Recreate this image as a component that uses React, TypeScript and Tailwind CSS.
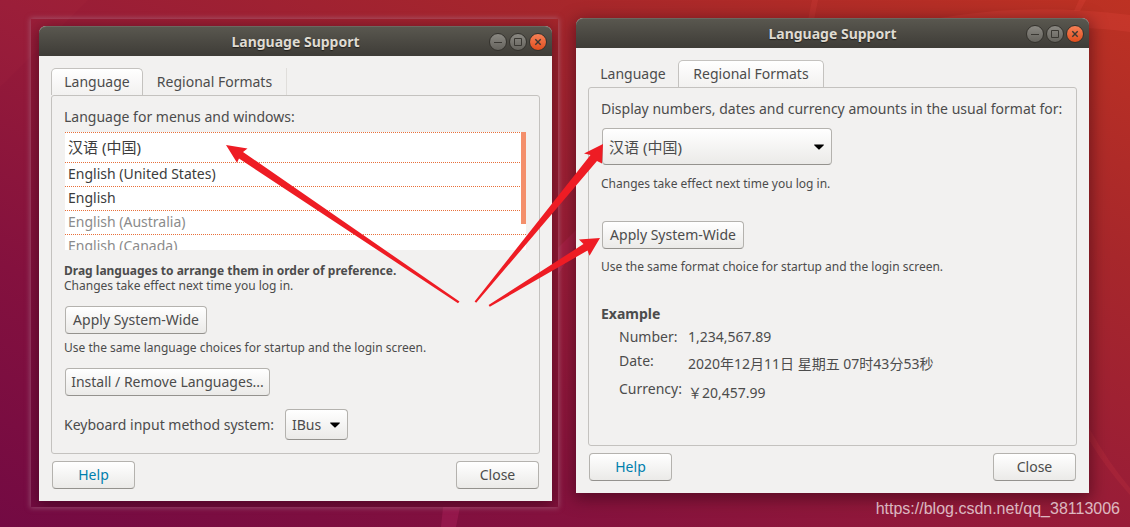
import type { ReactNode } from "react";

const languages = [
  { name: "汉语 (中国)", style: "h-[30px] text-[15px] text-[#3c3c3c]" },
  { name: "English (United States)", style: "h-6 text-[#3c3c3c]" },
  { name: "English", style: "h-6 text-[#3c3c3c]" },
  { name: "English (Australia)", style: "h-6 text-[#8b8b8b]" },
  { name: "English (Canada)", style: "h-6 text-[#8b8b8b]" },
];

const buttonBase =
  "h-7 rounded border border-[#b4b2ae] border-b-[#94928e] bg-linear-to-b from-white to-[#ebeae8] whitespace-nowrap";

function ActionButton({ children, wide }: { children: ReactNode; wide?: boolean }) {
  return (
    <button type="button" className={wide ? `${buttonBase} ml-px w-[205px]` : `${buttonBase} ml-px w-[142px]`}>
      {children}
    </button>
  );
}

function Note({ children, className = "" }: { children: ReactNode; className?: string }) {
  return <p className={`text-[12px] leading-[15px] ${className}`}>{children}</p>;
}

function DropDown({ id, value, className }: { id: string; value: string; className: string }) {
  return (
    <div className={`relative ${className}`}>
      <select
        id={id}
        defaultValue={value}
        className="h-full w-full appearance-none rounded border border-[#b4b2ae] border-b-[#94928e] bg-linear-to-b from-white to-[#ebeae8] pl-1.5"
      >
        <option>{value}</option>
      </select>
      <svg className="pointer-events-none absolute top-1/2 right-2 -mt-[3px] h-1.5 w-[10px]" viewBox="0 0 10 6">
        <path d="M.2 .4h9.6v.8L5.4 5.6h-.8L.2 1.2z" fill="#000" />
      </svg>
    </div>
  );
}

function WindowControl({ kind }: { kind: "Minimize" | "Maximize" | "Close" }) {
  const close = kind === "Close";
  return (
    <button
      type="button"
      aria-label={`${kind} window`}
      className={
        close
          ? "size-[18px] rounded-full border border-[#34322d] bg-linear-to-b from-[#f68055] to-[#e04d1b]"
          : "size-[18px] rounded-full border border-[#34322d] bg-linear-to-b from-[#8b8983] to-[#65635d]"
      }
    >
      <svg viewBox="0 0 16 16" className="size-4" fill="none" stroke="#3a3833" strokeWidth="1">
        {kind === "Minimize" && <path d="M4 8.5h8" />}
        {kind === "Maximize" && <path d="M4.5 4.5h7v7h-7z" />}
        {close && <path d="M5.3 5.3l5.4 5.4M10.7 5.3l-5.4 5.4" strokeWidth="1.4" />}
      </svg>
    </button>
  );
}

function Tabs({ active }: { active: number }) {
  const on = "rounded-t-[5px] border border-b-0 border-[#c4c2bf] bg-linear-to-b from-white to-[#f2f1f0]";
  return (
    <div role="tablist" className="flex h-[27px]">
      <button type="button" role="tab" aria-selected={active === 0} className={active === 0 ? `w-[92px] ${on}` : "w-[90px]"}>
        Language
      </button>
      <button
        type="button"
        role="tab"
        aria-selected={active === 1}
        className={active === 1 ? `w-[146px] ${on}` : "w-[144px] border-r border-[#e0dedb]"}
      >
        Regional Formats
      </button>
    </div>
  );
}

function DialogWindow({ active, panelClass, children }: { active: number; panelClass: string; children: ReactNode }) {
  return (
    <section className="rounded-t-[7px] bg-[#f2f1f0] text-[14px] leading-5 text-[#4c4c4c] shadow-[0_4px_16px_2px_rgba(40,0,15,0.5)]">
      <header className="grid h-[30px] grid-cols-[1fr_auto_1fr] items-center rounded-t-[7px] border-t border-[#6b6860] bg-linear-to-b from-[#59574f] to-[#3e3c37] px-[5px]">
        <h1 className="col-start-2 font-bold text-[#dfdbd2] [text-shadow:0_1px_1px_#22201c]">Language Support</h1>
        <div className="flex justify-end gap-0.5">
          <WindowControl kind="Minimize" />
          <WindowControl kind="Maximize" />
          <WindowControl kind="Close" />
        </div>
      </header>
      <div className="px-3 py-3">
        <Tabs active={active} />
        <div role="tabpanel" className={`rounded-[3px] border border-[#c4c2bf] pt-[11px] pl-3 ${panelClass}`}>
          {children}
        </div>
        <footer className="mt-[7px] flex justify-between px-px">
          <button type="button" className={`${buttonBase} w-[83px] text-[#007fae]`}>
            Help
          </button>
          <button type="button" className={`${buttonBase} w-[83px]`}>
            Close
          </button>
        </footer>
      </div>
    </section>
  );
}

function LanguagePanel() {
  return (
    <>
      <h2>Language for menus and windows:</h2>
      <div className="relative mt-[5px] ml-px h-[118px] overflow-hidden bg-white">
        <ul>
          {languages.map((l) => (
            <li key={l.name} className={`flex items-center border-t border-dotted border-[#e8703a] pb-0.5 pl-[3px] ${l.style}`}>
              {l.name}
            </li>
          ))}
        </ul>
        <div className="absolute top-0 right-0 h-[92px] w-[5px] bg-[#f48f6b]" />
      </div>
      <Note className="mt-[13px] font-bold">Drag languages to arrange them in order of preference.</Note>
      <Note className="mb-[13px]">Changes take effect next time you log in.</Note>
      <ActionButton>Apply System-Wide</ActionButton>
      <Note className="mt-1.5 mb-[13px]">Use the same language choices for startup and the login screen.</Note>
      <ActionButton wide>Install / Remove Languages...</ActionButton>
      <div className="mt-[13px] flex items-center gap-[7px]">
        <label htmlFor="input-method" className="min-w-[214px] whitespace-nowrap">
          Keyboard input method system:
        </label>
        <DropDown id="input-method" value="IBus" className="h-[31px] w-[63px]" />
      </div>
    </>
  );
}

function FormatsPanel() {
  return (
    <>
      <label htmlFor="format" className="block whitespace-nowrap">
        Display numbers, dates and currency amounts in the usual format for:
      </label>
      <DropDown id="format" value="汉语 (中国)" className="mt-[9px] ml-px h-[37px] w-[230px] text-[15px]" />
      <Note className="mt-[11px] mb-[30px]">Changes take effect next time you log in.</Note>
      <ActionButton>Apply System-Wide</ActionButton>
      <Note className="mt-[10px]">Use the same format choice for startup and the login screen.</Note>
      <h2 className="mt-[30px] font-bold">Example</h2>
      <dl className="mt-[3px] grid grid-cols-[69px_1fr] gap-y-1 pl-[18px]">
        <dt>Number:</dt>
        <dd>1,234,567.89</dd>
        <dt>Date:</dt>
        <dd className="pt-[3px] pb-px">2020年12月11日 星期五 07时43分53秒</dd>
        <dt>Currency:</dt>
        <dd className="pt-1">￥20,457.99</dd>
      </dl>
    </>
  );
}

function Wallpaper() {
  return (
    <svg className="absolute inset-0 h-full w-full" viewBox="0 0 1130 527" preserveAspectRatio="none">
      <g fill="#ff5a50">
        <path d="M0 0H88L0 87z" fillOpacity=".03" />
        <path d="M812 0h6l-4 20h-6z" fillOpacity=".12" />
        <path d="M940 18Q1030 2 1130 15V32Q1100 28 1080 28L1040 18z" fillOpacity=".15" />
        <path d="M1079 0h7l-6 11h-6z" fillOpacity=".15" />
        <path d="M1089 428Q1108 462 1130 488V495Q1105 467 1089 440z" fillOpacity=".1" />
      </g>
      <g fill="#d02a70">
        <path d="M443 507h17l-4 20h-15z" fillOpacity=".25" />
        <path d="M558 248L576 230V245L558 275z" fillOpacity=".2" />
      </g>
    </svg>
  );
}

function Arrows() {
  return (
    <svg className="pointer-events-none absolute top-0 left-0 h-[527px] w-[1130px]" viewBox="0 0 1130 527" fill="#ee1c24">
      <path d="M226 145L247.5 148.5L243 152L459.5 301.5L458 303.2L239 158.5L237 162.8z" />
      <path d="M603 144L584 153.5L590.5 155L474.6 301.5L476.2 302.8L597 161L602 163.5z" />
      <path d="M600 238L579 239.5L583.5 244L488.6 305L489.8 306.8L587.5 250.5L589.5 255.8z" />
    </svg>
  );
}

export default function App() {
  return (
    <main className="relative flex min-h-screen items-start gap-[18px] overflow-hidden bg-[linear-gradient(to_top_right,#730a43_0%,#84113e_25%,#981c38_50%,#a7272b_75%,#bd3223_100%)] pt-[18px] pr-[41px] pb-5 pl-[31px] font-['Noto_Sans','Noto_Sans_CJK_SC',sans-serif]">
      <Wallpaper />
      <div className="relative mt-px flex-1 overflow-hidden pt-[7px] pr-1.5 pb-1.5 pl-2 shadow-[0_0_5px_1px_rgba(170,120,140,0.55)]">
        <DialogWindow active={0} panelClass="pr-[13px] pb-[13px]">
          <LanguagePanel />
        </DialogWindow>
      </div>
      <div className="relative flex-1">
        <DialogWindow active={1} panelClass="pr-3 pb-[42px]">
          <FormatsPanel />
        </DialogWindow>
      </div>
      <Arrows />
      <p className="absolute right-2.5 bottom-2 font-['Liberation_Sans',sans-serif] text-[16px] leading-5 text-white/70">
        https://blog.csdn.net/qq_38113006
      </p>
    </main>
  );
}
